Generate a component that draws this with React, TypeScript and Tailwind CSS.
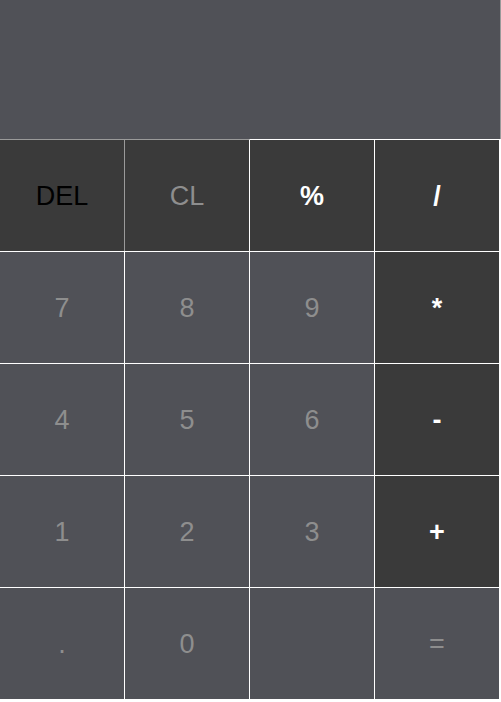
import React from 'react'

type Key = {
  label: string
  bg: string
  text: string
  border: string
}

const dark = 'bg-[#3a3a3a]'
const light = 'bg-[#505157]'
const gray = 'text-[#8e8e8e]'
const white = 'text-white font-bold'
const wb = 'border-t-white border-r-white'

const keys: Key[] = [
  { label: 'DEL', bg: dark, text: 'text-black', border: 'border-t-[#9a9a9a] border-r-[#9a9a9a]' },
  { label: 'CL', bg: dark, text: gray, border: 'border-t-[#9a9a9a] border-r-white' },
  { label: '%', bg: dark, text: white, border: wb },
  { label: '/', bg: dark, text: white, border: wb },
  { label: '7', bg: light, text: gray, border: wb },
  { label: '8', bg: light, text: gray, border: wb },
  { label: '9', bg: light, text: gray, border: wb },
  { label: '*', bg: dark, text: white, border: wb },
  { label: '4', bg: light, text: gray, border: wb },
  { label: '5', bg: light, text: gray, border: wb },
  { label: '6', bg: light, text: gray, border: wb },
  { label: '-', bg: dark, text: white, border: wb },
  { label: '1', bg: light, text: gray, border: wb },
  { label: '2', bg: light, text: gray, border: wb },
  { label: '3', bg: light, text: gray, border: wb },
  { label: '+', bg: dark, text: white, border: wb },
  { label: '.', bg: light, text: gray, border: wb },
  { label: '0', bg: light, text: gray, border: wb },
  { label: '', bg: light, text: gray, border: wb },
  { label: '=', bg: light, text: gray, border: wb },
]

export default function App() {
  return (
    <div className="w-[501px] font-['Liberation_Sans',Arial,sans-serif]">
      {/* Display */}
      <div className="h-[139px] w-[501px] bg-[#505157] border-r border-r-[#9a9a9a]" />

      {/* Keypad */}
      <div className="grid w-[500px] grid-cols-4">
        {keys.map((k, i) => (
          <button
            key={i}
            className={`h-[112px] pt-[2px] border-t border-r ${k.border} ${k.bg} ${k.text} flex items-center justify-center text-[27px] leading-none`}
          >
            {k.label}
          </button>
        ))}
      </div>
    </div>
  )
}
